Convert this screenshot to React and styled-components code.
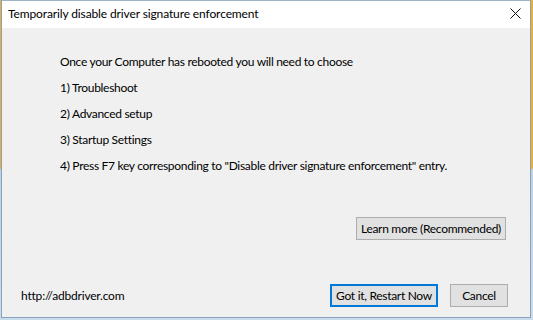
import React from "react";
import styled, { createGlobalStyle } from "styled-components";

const Global = createGlobalStyle`
  html, body { margin: 0; padding: 0; }
  body {
    width: 533px;
    height: 320px;
    overflow: hidden;
    font-family: Lato, "Noto Sans", sans-serif;
  }
`;

const Desktop = styled.div`
  width: 533px;
  height: 320px;
  background: linear-gradient(180deg, #e9ad3c 0px, #e9ad3c 168px, #bcd3e6 170px, #c9dcec 100%);
  padding: 0 2px 2px 1px;
  box-sizing: border-box;
  display: flex;
`;

const Window = styled.div`
  flex: 1;
  display: flex;
  flex-direction: column;
  border: 1px solid #8aa3bd;
  border-top-color: #9fb3c7;
  background: #f0f0f0;
  box-sizing: border-box;
`;

const TitleBar = styled.div`
  height: 27px;
  background: #ffffff;
  display: flex;
  align-items: center;
  justify-content: space-between;
  padding: 0 9px 2px 6px;
  box-sizing: border-box;
  flex-shrink: 0;
`;

const Title = styled.span`
  font-size: 12px;
  letter-spacing: -0.12px;
  color: #000;
`;

const CloseBtn = styled.div`
  width: 12px;
  height: 12px;
  display: flex;
  align-items: center;
  justify-content: center;
`;

const Body = styled.div`
  flex: 1;
  display: flex;
  flex-direction: column;
  padding: 21px 22px 10px 18px;
`;

const Steps = styled.div`
  padding-left: 40px;
  display: flex;
  flex-direction: column;
`;

const Line = styled.div`
  font-size: 12px;
  letter-spacing: -0.3px;
  line-height: 26px;
  height: 26px;
  color: #000;
  white-space: nowrap;
`;

const LearnRow = styled.div`
  display: flex;
  justify-content: flex-end;
  margin-top: 38px;
  padding-right: 2px;
`;

const Footer = styled.div`
  margin-top: auto;
  display: flex;
  align-items: center;
`;

const Link = styled.span`
  font-size: 12px;
  letter-spacing: -0.2px;
  color: #000;
  flex: 1;
  padding-left: 1px;
`;

const Buttons = styled.div`
  display: flex;
  gap: 12px;
`;

const Button = styled.button`
  height: 23px;
  width: ${(p) => p.$w}px;
  box-sizing: border-box;
  font-family: inherit;
  font-size: 12px;
  letter-spacing: -0.3px;
  color: #000;
  background: #e1e1e1;
  border: 1px solid ${(p) => (p.$default ? "#0078d7" : "#adadad")};
  box-shadow: ${(p) => (p.$default ? "inset 0 0 0 1px #0078d7" : "none")};
  padding: 0;
  margin: 0;
  border-radius: 0;
  display: flex;
  align-items: center;
  justify-content: center;
  white-space: nowrap;
`;

export default function App() {
  return (
    <>
      <Global />
      <Desktop>
        <Window>
          <TitleBar>
            <Title>Temporarily disable driver signature enforcement</Title>
            <CloseBtn>
              <svg width="11" height="11" viewBox="0 0 11 11">
                <path d="M0.5 0.5 L10.5 10.5 M10.5 0.5 L0.5 10.5" stroke="#111" strokeWidth="1" fill="none" />
              </svg>
            </CloseBtn>
          </TitleBar>
          <Body>
            <Steps>
              <Line>Once your Computer has rebooted you will need to choose</Line>
              <Line>1) Troubleshoot</Line>
              <Line>2) Advanced setup</Line>
              <Line>3) Startup Settings</Line>
              <Line>4) Press F7 key corresponding to "Disable driver signature enforcement" entry.</Line>
            </Steps>
            <LearnRow>
              <Button $w={150}>Learn more (Recommended)</Button>
            </LearnRow>
            <Footer>
              <Link>http://adbdriver.com</Link>
              <Buttons>
                <Button $w={108} $default>Got it, Restart Now</Button>
                <Button $w={58}>Cancel</Button>
              </Buttons>
            </Footer>
          </Body>
        </Window>
      </Desktop>
    </>
  );
}
